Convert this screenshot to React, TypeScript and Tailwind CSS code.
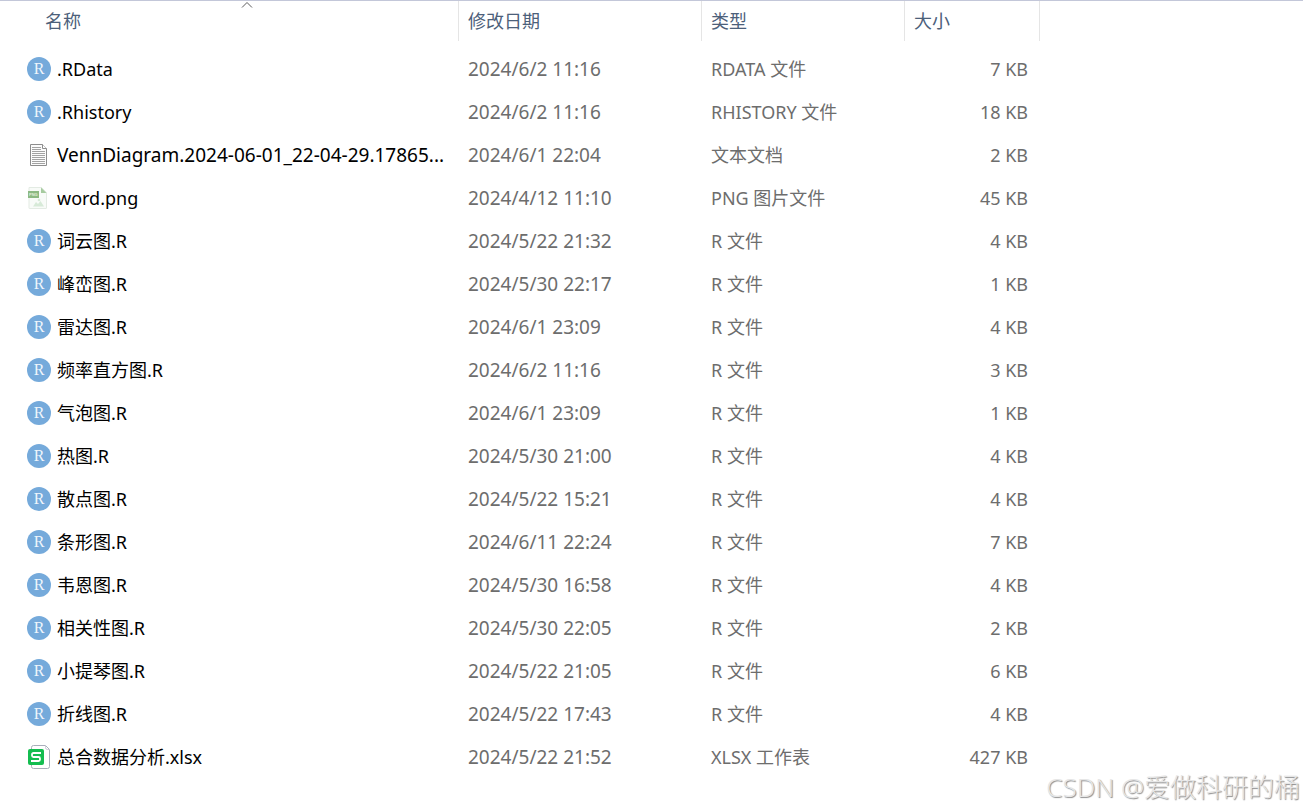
import React, { useState } from "react";

type FileKind = "r" | "text" | "png" | "xlsx";

interface FileItem {
    name: string;
    date: string;
    type: string;
    size: string;
    kind: FileKind;
}

const files: FileItem[] = [
    { name: ".RData", date: "2024/6/2 11:16", type: "RDATA 文件", size: "7 KB", kind: "r" },
    { name: ".Rhistory", date: "2024/6/2 11:16", type: "RHISTORY 文件", size: "18 KB", kind: "r" },
    { name: "VennDiagram.2024-06-01_22-04-29.17865...", date: "2024/6/1 22:04", type: "文本文档", size: "2 KB", kind: "text" },
    { name: "word.png", date: "2024/4/12 11:10", type: "PNG 图片文件", size: "45 KB", kind: "png" },
    { name: "词云图.R", date: "2024/5/22 21:32", type: "R 文件", size: "4 KB", kind: "r" },
    { name: "峰峦图.R", date: "2024/5/30 22:17", type: "R 文件", size: "1 KB", kind: "r" },
    { name: "雷达图.R", date: "2024/6/1 23:09", type: "R 文件", size: "4 KB", kind: "r" },
    { name: "频率直方图.R", date: "2024/6/2 11:16", type: "R 文件", size: "3 KB", kind: "r" },
    { name: "气泡图.R", date: "2024/6/1 23:09", type: "R 文件", size: "1 KB", kind: "r" },
    { name: "热图.R", date: "2024/5/30 21:00", type: "R 文件", size: "4 KB", kind: "r" },
    { name: "散点图.R", date: "2024/5/22 15:21", type: "R 文件", size: "4 KB", kind: "r" },
    { name: "条形图.R", date: "2024/6/11 22:24", type: "R 文件", size: "7 KB", kind: "r" },
    { name: "韦恩图.R", date: "2024/5/30 16:58", type: "R 文件", size: "4 KB", kind: "r" },
    { name: "相关性图.R", date: "2024/5/30 22:05", type: "R 文件", size: "2 KB", kind: "r" },
    { name: "小提琴图.R", date: "2024/5/22 21:05", type: "R 文件", size: "6 KB", kind: "r" },
    { name: "折线图.R", date: "2024/5/22 17:43", type: "R 文件", size: "4 KB", kind: "r" },
    { name: "总合数据分析.xlsx", date: "2024/5/22 21:52", type: "XLSX 工作表", size: "427 KB", kind: "xlsx" },
];

const columns = ["名称", "修改日期", "类型", "大小"];

function FileIcon({ kind }: { kind: FileKind }) {
    if (kind === "r") {
        return (
            <span className="flex size-6 shrink-0 items-center justify-center rounded-full bg-[#75aadb] font-['Liberation_Serif',serif] text-base leading-6 text-[#f0f6fb]">
                R
            </span>
        );
    }

    if (kind === "text") {
        return (
            <svg className="size-6 shrink-0" viewBox="0 0 24 24" fill="none" aria-hidden="true">
                <path d="M3.5 1.5h12l4 4v17h-16z" fill="#fcfcfc" stroke="#8d8d8d" />
                <path d="M15.5 1.5v4h4" fill="#fff" stroke="#8d8d8d" />
                <path d="M5 4.5h9M5 6.5h9M5 8.5h13M5 10.5h13M5 12.5h13M5 14.5h13M5 16.5h13M5 18.5h13M5 20.5h13" stroke="#a3a3a3" />
            </svg>
        );
    }

    if (kind === "png") {
        return (
            <svg className="size-6 shrink-0" viewBox="0 0 24 24" aria-hidden="true">
                <path d="M2 1.5h12.5l5 5V22q0 .5-.5.5H2.500q-.5 0-.5-.5z" fill="#f8fbf8" stroke="#e3ebe3" />
                <path d="M14 1.500v5.500h5.500z" fill="#a6cb9f" />
                <path d="M6 20.500l3-4.500 2 2 2.500-3 3.500 5.500z" fill="#d7ead8" />
                <circle cx="12" cy="14" r="1.300" fill="#d7ead8" />
                <path d="M1 5h11v7H1z" fill="#8cb982" />
                <text x="2" y="10" fontSize="4" fontWeight="700" fontFamily="Liberation Sans, sans-serif" fill="#e4f1df">
                    PNG
                </text>
            </svg>
        );
    }

    return (
        <svg className="size-6 shrink-0" viewBox="0 0 24 24" fill="none" aria-hidden="true">
            <path d="M6.500.5h12l4 4v17q0 2-2 2h-14q-2 0-2-2v-19q0-2 2-2z" fill="#fff" stroke="#a9afbb" />
            <path d="M18.500.5v2q0 2 2 2h2" stroke="#c9cdd5" />
            <rect x="1" y="4" width="16" height="16" rx="2" fill="#14bd50" />
            <path d="M14 8H6.500q-1.500 0-1.500 1.500v1Q5 12 6.500 12h5q1.500 0 1.500 1.500v1q0 1.500-1.500 1.500H4" stroke="#fff" strokeWidth="1.800" />
        </svg>
    );
}

function App() {
    const [selected, setSelected] = useState<string | null>(null);

    return (
        <main className="relative min-h-screen overflow-hidden border-t border-[#c3c7d9] bg-white font-['Noto_Sans','Noto_Sans_CJK_SC',sans-serif] text-lg text-[#6d6d6d]">
            <table className="w-full table-fixed border-collapse text-left">
                <colgroup>
                    <col className="w-[459px]" />
                    <col className="w-[243px]" />
                    <col className="w-[203px]" />
                    <col className="w-[135px]" />
                    <col />
                </colgroup>
                <thead>
                    <tr>
                        {columns.map((column, index) => (
                            <th key={column} scope="col" className="p-0 pb-[6px] font-normal text-[#4c607a]">
                                <button
                                    type="button"
                                    className={`relative flex h-10 w-full items-center border-r border-[#e5e5e5] ${index === 0 ? "pl-[45px]" : "pl-[9px]"}`}
                                >
                                    {column}
                                    {index === 0 && (
                                        <svg
                                            className="absolute top-0 left-[241px] h-2 w-3"
                                            viewBox="0 0 12 8"
                                            fill="none"
                                            stroke="#5c5c5c"
                                            aria-hidden="true"
                                        >
                                            <path d="M1 6.500l5-5 5 5" />
                                        </svg>
                                    )}
                                </button>
                            </th>
                        ))}
                        <td />
                    </tr>
                </thead>
                <tbody>
                    {files.map((file) => (
                        <tr
                            key={file.name}
                            onClick={() => setSelected(file.name)}
                            className={`h-[43px] whitespace-nowrap ${selected === file.name ? "bg-[#cce8ff]" : ""}`}
                        >
                            <td className="p-0 pl-[27px] text-black">
                                <div className="flex items-center gap-[6px]">
                                    <FileIcon kind={file.kind} />
                                    <span className={file.kind === "text" ? "text-[19px] leading-7" : ""}>{file.name}</span>
                                </div>
                            </td>
                            <td className="p-0 pl-[9px] text-[19px] leading-7">{file.date}</td>
                            <td className="p-0 pl-[9px]">{file.type}</td>
                            <td className="p-0 pr-3 text-right">{file.size}</td>
                            <td />
                        </tr>
                    ))}
                </tbody>
            </table>

            <p className="absolute right-[3px] bottom-[5px] text-[26px] leading-9 font-light text-[#e6e6e6] [text-shadow:1px_1px_1px_#8c8c8c]">
                CSDN @爱做科研的桶
            </p>
        </main>
    );
}

export default App;
